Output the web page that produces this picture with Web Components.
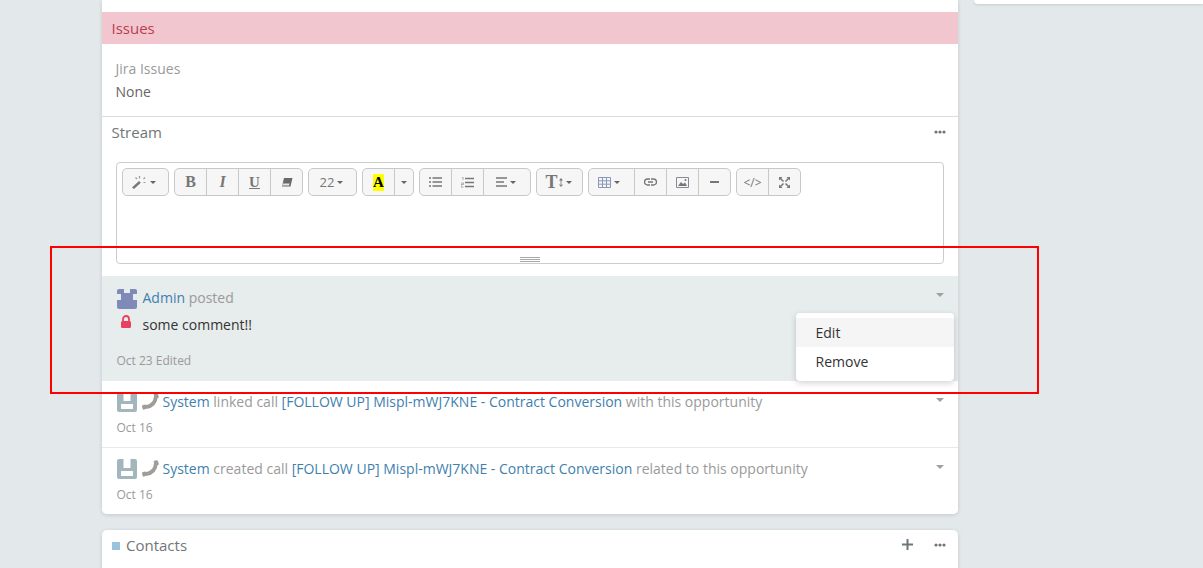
<!DOCTYPE html>
<html><head><meta charset="utf-8">
<style>
html,body{margin:0;height:568px;overflow:hidden;background:#e3e8eb;font-family:"Open Sans","Noto Sans",sans-serif;font-size:14px;color:#555}
</style></head><body>
<x-page>
  <x-card slot="main" flat>
    <x-issues></x-issues>
    <x-stream-head></x-stream-head>
    <x-editor></x-editor>
    <x-feed-item active kind="admin" date="Oct 23 Edited" locked><a-l>Admin</a-l> <g-t>posted</g-t><span slot="body">some comment!!</span></x-feed-item>
    <x-feed-item kind="system" date="Oct 16" line><a-l>System</a-l> <g-t>linked call</g-t> <a-l>[FOLLOW UP] Mispl-mWJ7KNE - Contract Conversion</a-l> <g-t>with this opportunity</g-t></x-feed-item>
    <x-feed-item kind="system" date="Oct 16"><a-l>System</a-l> <g-t>created call</g-t> <a-l>[FOLLOW UP] Mispl-mWJ7KNE - Contract Conversion</a-l> <g-t>related to this opportunity</g-t></x-feed-item>
  </x-card>
  <x-contacts slot="main"></x-contacts>
</x-page>
<x-menu></x-menu>
<x-outline></x-outline>

<script>
const def=(name,html,init)=>customElements.define(name,class extends HTMLElement{
  constructor(){super();this.attachShadow({mode:'open'}).innerHTML=typeof html==='function'?html(this):html;}
  connectedCallback(){if(init)init(this);}
});
const caret=(c='#666',w=6,h=3)=>`<svg width="${w}" height="${h}" viewBox="0 0 7 4" preserveAspectRatio="none" style="display:block;flex:none"><path d="M0 0h7L3.500 4z" fill="${c}"/></svg>`;
const dots=`<svg width="12" height="4" viewBox="0 0 12 4" style="display:block"><circle cx="2" cy="2" r="1.600" fill="#6f7678"/><circle cx="6" cy="2" r="1.600" fill="#6f7678"/><circle cx="10" cy="2" r="1.600" fill="#6f7678"/></svg>`;

def('x-page',`<style>
:host{display:flex;gap:16px;padding-left:102px;height:568px;overflow:hidden;align-items:flex-start}
.m{width:856px;display:flex;flex-direction:column;gap:16px;flex:none}
.r{flex:1;height:4px;background:#fff;border-radius:0 0 0 5px;box-shadow:0 1px 3px rgba(0,0,0,.12)}
</style><div class="m"><slot name="main"></slot></div><div class="r"></div>`);

def('x-card',`<style>
:host{display:block;background:#fff;border-radius:0 0 5px 5px;box-shadow:0 1px 4px rgba(0,0,0,.14);padding-top:12px;overflow:hidden}
</style><slot></slot>`);

def('a-l',`<style>:host{color:#3f7fae}</style><slot></slot>`);
def('g-t',`<style>:host{color:#9a9a9a}</style><slot></slot>`);

def('x-issues',`<style>
:host{display:block;height:104px;border-bottom:1px solid #dcdcdc}
.b{height:32px;background:#f2c6cf;color:#bb3c4e;font-size:15px;line-height:33px;padding-left:9.5px}
.l{color:#9a9a9a;padding:15px 13.5px 0;line-height:20px;font-size:14px}
.v{color:#666;padding:3px 13.5px 0;line-height:20px;font-size:14px}
</style><div class="b">Issues</div><div class="l">Jira Issues</div><div class="v">None</div>`);

def('x-stream-head',`<style>
:host{display:flex;justify-content:space-between;align-items:flex-start;height:41px;padding:4px 12.5px 0 9.5px;color:#6f7678;font-size:15px;line-height:22px}
.d{margin-top:9px}
</style><span>Stream</span><span class="d">${dots}</span>`);

def('x-editor',`<style>
:host{display:block;margin:0 14px 12px;height:100px;border:1px solid #ccc;border-radius:4px;position:relative;box-sizing:content-box}
.tb{display:flex;gap:5px;padding:5px}
.g{display:flex;height:28px;box-sizing:border-box;border:1px solid #c8c8c8;border-radius:5px;background:#f6f6f6;overflow:hidden}
.t{display:flex;align-items:center;justify-content:center;gap:3px;width:32px;height:100%;border-left:1px solid #c8c8c8;box-sizing:border-box;color:#777;font-size:13px}
.t:first-child{border-left:0;width:31px}
.s{font-family:"Liberation Serif",serif;font-weight:700;font-size:15px;color:#777}
.h{position:absolute;left:403px;bottom:1px;width:20px;height:5px;border-top:1px solid #a8a8a8;border-bottom:1px solid #a8a8a8;box-sizing:border-box}
.h:after{content:"";display:block;height:1px;margin-top:1px;background:#a8a8a8}
svg{display:block}
</style>
<div class="tb">
<div class="g" style="width:47px"><div class="t" style="width:100%;padding-right:4px"><svg width="15" height="14" viewBox="0 0 15 14"><path d="M0 12.500L7 6l1.800 1.800L2 14z" fill="#777"/><path d="M7.500 1v2.500M3.500 2.500L5 4M13 2.500L11.500 4M11.500 7.500h2" stroke="#999" stroke-width="1.200" fill="none"/></svg>${caret()}</div></div>
<div class="g"><div class="t"><span class="s" style="font-size:16px">B</span></div><div class="t"><span class="s" style="font-style:italic;font-size:16px">I</span></div><div class="t"><span class="s" style="text-decoration:underline;font-size:15px">U</span></div><div class="t"><svg width="12" height="9" viewBox="0 0 12 9"><path d="M3 0h8.500L9.500 8.500H1z" fill="#6a6a6a"/><path d="M1.800 5.500h6.800L8 7.500H1.400z" fill="#e4e4e4"/></svg></div></div>
<div class="g" style="width:49px"><div class="t" style="width:100%;gap:3px;font-size:13px;padding-right:2px">22 ${caret()}</div></div>
<div class="g"><div class="t"><span style="background:#ff0;color:#000;font:700 15px/17px 'Liberation Serif',serif;width:11px;text-align:center;display:block">A</span></div><div class="t" style="width:19px">${caret()}</div></div>
<div class="g"><div class="t"><svg width="13" height="10" viewBox="0 0 13 10"><path d="M3.500 1H13M3.500 5H13M3.500 9H13M0 1h2M0 5h2M0 9h2" stroke="#777" stroke-width="1.500"/></svg></div><div class="t"><svg width="13" height="11" viewBox="0 0 13 11"><path d="M4 1.500h9M4 5.500h9M4 9.500h9" stroke="#777" stroke-width="1.500"/><path d="M.5 0h1.500v3M0 6h2.500v1.500H0V10h2.500" stroke="#999" stroke-width=".8" fill="none"/></svg></div><div class="t" style="width:47px;gap:3px;padding-right:3px"><svg width="11" height="10" viewBox="0 0 11 10"><path d="M0 1h11M0 5h8M0 9h11" stroke="#777" stroke-width="1.500"/></svg>${caret()}</div></div>
<div class="g" style="width:47px"><div class="t" style="width:100%;gap:1px;padding-right:2px"><span class="s" style="font-size:18px;line-height:18px">T</span><svg width="4" height="11" viewBox="0 0 5 11"><path d="M2.500 0L5 3H0zM2.500 11L5 8H0zM2 2h1v7H2z" fill="#777"/></svg><span style="width:1px"></span>${caret()}</div></div>
<div class="g"><div class="t" style="width:45px;gap:3px;padding-right:5px"><svg width="13" height="11" viewBox="0 0 13 11"><path d="M.5.500h12v10H.5zM.5 3.800h12M.5 7.200h12M4.500.500v10M8.500.500v10" stroke="#8a98b8" fill="none"/></svg>${caret()}</div><div class="t"><svg width="13" height="8" viewBox="0 0 13 8"><path d="M6 1H3.500a3 3 0 000 6H6M7 1h2.500a3 3 0 010 6H7M4 4h5" stroke="#777" stroke-width="1.400" fill="none"/></svg></div><div class="t"><svg width="13" height="11" viewBox="0 0 13 11"><path d="M.5.500h12v10H.5z" stroke="#889" fill="none"/><path d="M2 9l3-4 2 2 2-1.500L11 9z" fill="#777"/><circle cx="9.500" cy="3" r="1" fill="#777"/></svg></div><div class="t"><svg width="9" height="2"><rect width="9" height="2" fill="#777"/></svg></div></div>
<div class="g"><div class="t" style="font-size:12px">&lt;/&gt;</div><div class="t"><svg width="11" height="11" viewBox="0 0 11 11"><path d="M1.500 1.500l3 3M9.500 1.500l-3 3M1.500 9.500l3-3M9.500 9.500l-3-3" stroke="#777" stroke-width="1.500"/><path d="M0 0h3.500L0 3.500zM11 0H7.500L11 3.500zM0 11h3.500L0 7.500zM11 11H7.500L11 7.500z" fill="#777"/></svg></div></div>
</div><div class="h"></div>`);

const av={
 admin:`<svg width="20" height="20" viewBox="0 0 20 20" style="display:block;flex:none"><path d="M2 0h5v4h6V0h5a2 2 0 012 2v3h-4v6h4v7a2 2 0 01-2 2H2a2 2 0 01-2-2v-7h4V5H0V2a2 2 0 012-2z" fill="#7f8ab8"/></svg>`,
 system:`<svg width="20" height="20" viewBox="0 0 20 20" style="display:block;flex:none"><path d="M2 0h4.500v9h7V0H18a2 2 0 012 2v16a2 2 0 01-2 2H2a2 2 0 01-2-2V2a2 2 0 012-2z" fill="#a3b6be"/><rect x="4" y="12" width="12" height="5" fill="#fff"/></svg>`};
const phone=`<svg width="17" height="17" viewBox="0 0 17 17" style="display:block;flex:none;margin:-2px -2px 0 -1px"><path d="M3.500 14.200C9.500 13.500 13.500 9.500 14 3" stroke="#a09c98" stroke-width="3.800" fill="none"/><path d="M11.500 1.200L14 .3c.8-.3 1.500 0 1.900.7l.8 2.500c.2.600 0 1.300-.6 1.600l-2.600 1zM.9 12.100l2.800-.7 1.300 3.700-2.600 1.500c-.7.300-1.400.1-1.700-.5L.1 13.800c-.3-.7.100-1.500.8-1.700z" fill="#a09c98"/></svg>`;

customElements.define('x-feed-item',class extends HTMLElement{
 constructor(){super();const a=this.hasAttribute('active');const k=this.getAttribute('kind');
 this.attachShadow({mode:'open'}).innerHTML=`<style>
 :host{display:block;position:relative;box-sizing:border-box;padding:${a?'13px':'11px'} 15px 0;height:${a?'105px':'67px'};background:${a?'#e7ecec':'#fff'};${this.hasAttribute('line')?'border-bottom:1px solid #e8e8e8;':''}font-size:14px;line-height:20px}
 :host(:last-of-type){height:66px}
 .h{display:flex;gap:6px;align-items:center;height:20px}
 .txt{white-space:nowrap;margin-left:-.5px;${a?'margin-top:-2px':''}}
 .b{display:flex;align-items:center;margin-top:6px;height:20px;color:#333;gap:10.5px}
 .lk{margin-left:3px;margin-top:-7px}
 .d{color:#9a9a9a;font-size:12px;line-height:16px;margin-left:-.5px;margin-top:${a?'18px':'8px'}}
 .c{position:absolute;right:14px;top:17px}
 </style>
 <div class="h">${av[k]}${k==='system'?phone:''}<span class="txt"><slot></slot></span></div>
 ${a?`<div class="b"><svg class="lk" width="12" height="13" viewBox="0 0 12 13"><path d="M3 6V4a3 3 0 016 0v2" stroke="#e8405e" stroke-width="1.800" fill="none"/><rect x="1" y="6" width="10" height="7" rx="1.500" fill="#e8405e"/></svg><slot name="body"></slot></div>`:''}
 <div class="d">${this.getAttribute('date')}</div>
 <div class="c">${caret('#a0a0a0',8,4)}</div>`;}
});

def('x-contacts',`<style>
:host{display:flex;height:60px;align-self:stretch;background:#fff;border-radius:5px 5px 0 0;box-shadow:0 1px 4px rgba(0,0,0,.14);padding:0 12.5px 0 10px;color:#6f7678;font-size:15px;align-items:flex-start;box-sizing:border-box}
.q{width:8px;height:8px;background:#9cc3de;margin:12px 6px 0 0}
.n{line-height:22px;margin-top:4px;flex:1}
.p{margin:9px 20.5px 0 0}
.d{margin-top:13px}
</style><span class="q"></span><span class="n">Contacts</span>
<svg class="p" width="11" height="11" viewBox="0 0 11 11"><path d="M5.500 0v11M0 5.500h11" stroke="#6f7678" stroke-width="2"/></svg>
<span class="d">${dots}</span>`);

def('x-menu',`<style>
:host{position:absolute;left:796px;top:313px;width:158px;height:68px;box-sizing:border-box;background:#fff;border-radius:4px;padding:5px 0;box-shadow:0 2px 6px rgba(0,0,0,.18);color:#333;font-size:14px}
div{height:29px;line-height:29px;padding-left:19.5px}
.on{background:#f5f5f5}
</style><div class="on">Edit</div><div>Remove</div>`);

def('x-outline',`<style>
:host{position:absolute;left:50px;top:246px;width:989px;height:148px;box-sizing:border-box;border:2px solid #f00;pointer-events:none}
</style>`);
</script>
</body></html>
